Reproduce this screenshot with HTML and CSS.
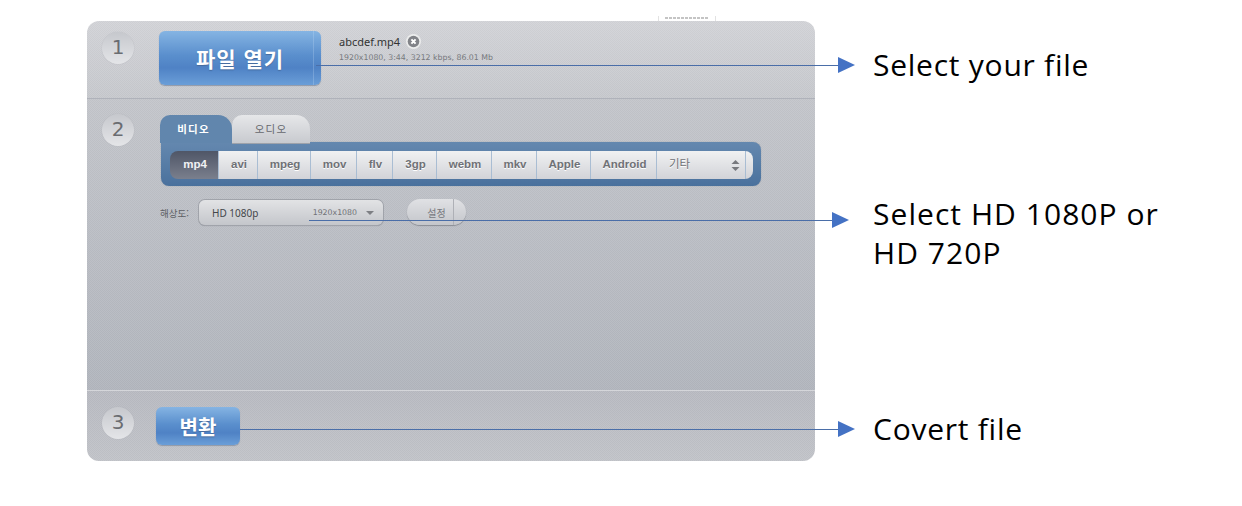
FILE: index.html
```html
<!DOCTYPE html>
<html lang="ko">
<head>
    <meta charset="UTF-8">
    <meta name="viewport" content="width=device-width, initial-scale=1.0">
    <title>Video Converter Steps</title>
    <link rel="stylesheet" href="styles.css">
</head>
<body>
    <div class="page">
        <div class="clipped-tag"><span></span></div>

        <div class="panel">
            <!-- Step 1 -->
            <section class="step step-open">
                <div class="step-num">1</div>
                <button class="blue-btn open-btn">파일 열기</button>
                <div class="file-info">
                    <div class="file-name">abcdef.mp4
                        <svg class="file-remove" width="15" height="15" viewBox="0 0 15 15">
                            <circle cx="7.5" cy="7.5" r="7.5" fill="#eceded"/>
                            <circle cx="7.5" cy="7.5" r="5.8" fill="#818388"/>
                            <path d="M5.4 5.4l4.2 4.2M9.6 5.4l-4.2 4.2" stroke="#fff" stroke-width="2"/>
                        </svg>
                    </div>
                    <div class="file-meta">1920x1080, 3:44, 3212 kbps, 86.01 Mb</div>
                </div>
            </section>

            <!-- Step 2 -->
            <section class="step step-format">
                <div class="step-num">2</div>
                <div class="format-area">
                    <div class="tabs">
                        <div class="tab tab-active">비디오</div>
                        <div class="tab">오디오</div>
                    </div>
                    <div class="format-box">
                        <div class="format-row">
                            <div class="fmt fmt-active fmt-mp4">mp4</div>
                            <div class="fmt fmt-avi">avi</div>
                            <div class="fmt fmt-mpeg">mpeg</div>
                            <div class="fmt fmt-mov">mov</div>
                            <div class="fmt fmt-flv">flv</div>
                            <div class="fmt fmt-3gp">3gp</div>
                            <div class="fmt fmt-webm">webm</div>
                            <div class="fmt fmt-mkv">mkv</div>
                            <div class="fmt fmt-apple">Apple</div>
                            <div class="fmt fmt-android">Android</div>
                            <div class="fmt fmt-other">
                                <span class="other-label">기타</span>
                                <svg width="9" height="11" viewBox="0 0 9 11">
                                    <path d="M4.5 0L8.5 4H.5zM4.5 11L.5 7h8z" fill="#77797e"/>
                                </svg>
                            </div>
                            <div class="fmt fmt-end"></div>
                        </div>
                    </div>
                    <div class="quality-row">
                        <label class="quality-label">해상도:</label>
                        <div class="quality-select">
                            <span class="quality-name">HD 1080p</span>
                            <span class="quality-size">1920x1080</span>
                            <span class="caret"></span>
                        </div>
                        <button class="settings-btn">설정</button>
                    </div>
                </div>
            </section>

            <!-- Step 3 -->
            <section class="step step-convert">
                <div class="step-num">3</div>
                <button class="blue-btn convert-btn">변환</button>
            </section>
        </div>

        <div class="notes">
            <p class="note note-file">Select your file</p>
            <p class="note note-hd">Select HD 1080P or<br>HD 720P</p>
            <p class="note note-convert">Covert file</p>
        </div>

        <!-- arrows run over the panel -->
        <div class="arrow arrow-file"></div>
        <div class="arrow arrow-hd"></div>
        <div class="arrow arrow-convert"></div>
    </div>
</body>
</html>
```

FILE: styles.css
```css
body {
    margin: 0;
    background-color: #fff;
    font-family: "Liberation Sans", "Noto Sans CJK KR", sans-serif;
}

.page {
    position: relative;
    display: flex;
    width: 1242px;
    height: 506px;
    padding: 21px 0 0 87px;
    box-sizing: border-box;
    overflow: hidden;
}

.clipped-tag {
    position: absolute;
    left: 658px;
    top: 16px;
    width: 58px;
    height: 5px;
    box-sizing: border-box;
    border-left: 1px solid #e2e2e2;
    border-right: 1px solid #e2e2e2;
}

.clipped-tag span {
    display: block;
    height: 2px;
    margin: 1px 6px 0;
    background: repeating-linear-gradient(90deg, #c4c4c4 0 3px, #fff 3px 4px);
}

.panel {
    position: relative;
    width: 728px;
    height: 440px;
    flex-shrink: 0;
    border-radius: 12px;
    overflow: hidden;
    display: flex;
    flex-direction: column;
}

/* fine grain over the panel background */
.step {
    position: relative;
    display: flex;
    box-sizing: border-box;
    --grain: conic-gradient(rgba(255, 255, 255, 0.05) 25%, rgba(0, 0, 0, 0.02) 0 50%, rgba(255, 255, 255, 0.05) 0 75%, rgba(0, 0, 0, 0.02) 0) 0 0 / 2px 2px;
}

.step-num {
    width: 32px;
    height: 32px;
    margin-left: 15px;
    flex-shrink: 0;
    border-radius: 50%;
    background: linear-gradient(#c6c8cd, #e4e5e8);
    box-shadow: 0 0 1px #a8aab0;
    color: #6a6c71;
    font-family: "DejaVu Sans", sans-serif;
    font-size: 20px;
    line-height: 31px;
    text-align: center;
}

.step-open {
    height: 78px;
    padding-top: 11px;
    background: var(--grain), linear-gradient(#d3d4d8, #c7c9ce);
    border-bottom: 1px solid #afb2ba;
}

.step-format {
    height: 292px;
    padding-top: 15px;
    background: var(--grain), linear-gradient(#c4c6cb, #b2b6be);
    border-bottom: 1px solid #d5d6da;
}

.step-format .format-area {
    margin-top: 1px;
}

.step-convert {
    height: 70px;
    padding-top: 16px;
    background: var(--grain), linear-gradient(#b9bbc2, #c2c4c9);
}

.blue-btn {
    display: block;
    padding: 0;
    border: none;
    border-radius: 6px;
    background: linear-gradient(#85b4e3 0%, #5a8fcd 45%, #4f82c5 68%, #6a9ed8 100%);
    box-shadow: 0 1px 1px #8f98a8;
    color: #fff;
    font-family: "Noto Sans CJK KR", sans-serif;
    font-weight: 700;
    text-shadow: 0 1px 1px #456a9c;
}

.open-btn {
    width: 162px;
    height: 54px;
    margin: -1px 0 0 25px;
    background: linear-gradient(90deg, transparent 154px, rgba(200, 222, 245, 0.25) 154px, rgba(200, 222, 245, 0.25) 155px, transparent 155px), linear-gradient(#85b4e3 0%, #5a8fcd 45%, #4f82c5 68%, #6a9ed8 100%);
    font-size: 21px;
    letter-spacing: 1px;
}

.convert-btn {
    width: 84px;
    height: 38px;
    margin: 0 0 0 22px;
    font-size: 20px;
}

.file-info {
    margin-left: 18px;
    color: #333;
}

.file-name {
    display: flex;
    align-items: center;
    gap: 6px;
    height: 19px;
    font-family: "Noto Sans", sans-serif;
    font-size: 11px;
}

.file-meta {
    margin-top: 2px;
    color: #77797e;
    font-family: "DejaVu Sans", sans-serif;
    font-size: 7.8px;
}

.format-area {
    margin-left: 26px;
    width: 602px;
}

.tabs {
    display: flex;
    height: 28px;
}

.tab {
    width: 78px;
    border-radius: 10px 14px 0 0;
    background: linear-gradient(#e6e7e9, #c8cacf);
    box-shadow: 0 1px 0 #9ea2aa;
    color: #65676c;
    font-family: "Noto Sans CJK KR", sans-serif;
    font-size: 10.5px;
    letter-spacing: 1.2px;
    line-height: 28px;
    text-align: center;
}

.tab-active {
    width: 72px;
    padding-right: 5px;
    box-sizing: border-box;
    background: #6186ad;
    box-shadow: none;
    color: #fff;
    font-weight: 700;
}

.format-box {
    width: 600px;
    height: 44px;
    margin: -1px 0 0 1px;
    padding: 9px 8px 0 9px;
    box-sizing: border-box;
    border-radius: 0 8px 8px 8px;
    background: linear-gradient(#6488af, #4a719d);
    box-shadow: 0 0 1px #7d8490;
}

.format-row {
    display: flex;
    height: 28px;
    border-radius: 8px;
    overflow: hidden;
}

.fmt {
    box-sizing: border-box;
    padding-left: 2px;
    border-right: 1px solid #a9bdd3;
    background: linear-gradient(#f0f1f2, #d2d3d8);
    color: #6f7176;
    font-size: 11.5px;
    font-weight: 700;
    line-height: 27px;
    text-align: center;
    text-shadow: 0 1px 0 #fff;
}

.fmt-active {
    background: linear-gradient(#4f5667, #7a7f8d);
    color: #f0f1f3;
    text-shadow: none;
}

.fmt-mp4 { width: 49px; }
.fmt-avi { width: 39px; }
.fmt-mpeg { width: 53px; }
.fmt-mov { width: 46px; }
.fmt-flv { width: 36px; }
.fmt-3gp { width: 44px; }
.fmt-webm { width: 55px; }
.fmt-mkv { width: 45px; }
.fmt-apple { width: 54px; }
.fmt-android { width: 66px; }

.fmt-other {
    display: flex;
    align-items: center;
    justify-content: space-between;
    width: 89px;
    padding: 0 5px 0 12px;
}

.other-label {
    margin-top: -3px;
    font-family: "Noto Sans CJK KR", sans-serif;
    font-size: 11.5px;
    font-weight: 400;
}

.fmt-end {
    flex: 1;
    padding: 0;
    border-right: none;
}

.quality-row {
    display: flex;
    align-items: flex-start;
    margin-top: 14px;
}

.quality-label {
    width: 39px;
    margin-top: 6px;
    color: #5d5f64;
    font-family: "Noto Sans CJK KR", sans-serif;
    font-size: 9.5px;
}

.quality-select {
    display: flex;
    align-items: center;
    width: 184px;
    height: 25px;
    padding: 0 9px 0 13px;
    box-sizing: border-box;
    border-radius: 6px;
    background: linear-gradient(#e2e3e5, #c4c6cb);
    box-shadow: 0 0 0 1px #a0a3aa, 0 1px 1px #8a8d94;
    color: #44464b;
}

.quality-name {
    flex: 1;
    font-family: "Noto Sans", sans-serif;
    font-size: 10px;
}

.quality-size {
    margin-right: 9px;
    color: #6f7176;
    font-family: "DejaVu Sans", sans-serif;
    font-size: 7.8px;
}

.caret {
    width: 0;
    height: 0;
    border-left: 4px solid transparent;
    border-right: 4px solid transparent;
    border-top: 4px solid #7d7f84;
}

.settings-btn {
    width: 59px;
    height: 26px;
    margin: -1px 0 0 24px;
    padding: 0;
    border: none;
    border-radius: 13px;
    background: linear-gradient(90deg, transparent 46px, #aeb0b6 46px, #aeb0b6 47px, transparent 47px), linear-gradient(#e0e1e4, #c4c6cb);
    box-shadow: 0 1px 1px #8a8d94;
    color: #77797e;
    font-family: "Noto Sans CJK KR", sans-serif;
    font-size: 10px;
}

.notes {
    margin-left: 58px;
    color: #000;
    font-family: "Open Sans", "Noto Sans", sans-serif;
    font-size: 30px;
    letter-spacing: 0.75px;
}

.note {
    margin: 0;
    line-height: 39px;
    white-space: nowrap;
}

.note-file {
    margin-top: 24px;
}

.note-hd {
    margin-top: 110px;
    letter-spacing: 1.05px;
}

.note-convert {
    margin-top: 137px;
}

.arrow {
    position: absolute;
    height: 1px;
    background-color: #4a6ea8;
}

.arrow::after {
    content: "";
    position: absolute;
    right: -17px;
    top: -8px;
    border-left: 17px solid #4472c4;
    border-top: 8.5px solid transparent;
    border-bottom: 8.5px solid transparent;
}

.arrow-file {
    left: 316px;
    top: 65px;
    width: 522px;
}

.arrow-hd {
    left: 309px;
    top: 220px;
    width: 523px;
}

.arrow-convert {
    left: 240px;
    top: 429px;
    width: 598px;
}
```
